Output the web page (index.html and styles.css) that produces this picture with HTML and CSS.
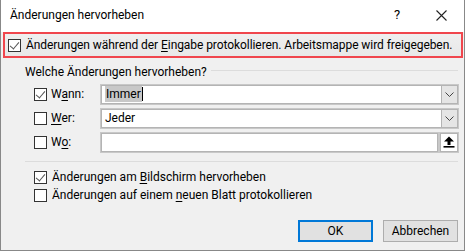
FILE: index.html
```html
<!DOCTYPE html>
<html lang="de">

<head>
	<meta charset="UTF-8">
	<meta name="viewport"
				content="width=device-width, initial-scale=1.0">
	<title>Änderungen hervorheben</title>
	<link rel="stylesheet" href="styles.css">
</head>

<body>
	<div class="dialog">
		<div class="titlebar">
			<span class="title">Änderungen hervorheben</span>
			<span class="help">?</span>
			<span class="close">
				<svg width="11" height="11" viewBox="0 0 11 11">
					<path d="M0.5 0.5 L10.5 10.5 M10.5 0.5 L0.5 10.5" stroke="#222" stroke-width="1.1" fill="none" />
				</svg>
			</span>
		</div>

		<div class="track-row">
			<span class="check checked"></span>
			<span class="label">Änderungen während der <u>E</u>ingabe protokollieren. Arbeitsmappe wird freigegeben.</span>
		</div>

		<div class="group">
			<div class="group-title">
				<span>Welche Änderungen hervorheben?</span>
				<span class="rule"></span>
			</div>

			<div class="field-row">
				<span class="check checked"></span>
				<span class="field-label">W<u>a</u>nn:</span>
				<div class="combo">
					<span class="combo-text"><span class="selected">Immer</span><span class="caret"></span></span>
					<span class="drop"><svg width="9" height="5" viewBox="0 0 9 5"><path d="M0.5 0.5 L4.5 4.5 L8.5 0.5" stroke="#444" fill="none" /></svg></span>
				</div>
			</div>

			<div class="field-row">
				<span class="check"></span>
				<span class="field-label"><u>W</u>er:</span>
				<div class="combo">
					<span class="combo-text">Jeder</span>
					<span class="drop"><svg width="9" height="5" viewBox="0 0 9 5"><path d="M0.5 0.5 L4.5 4.5 L8.5 0.5" stroke="#444" fill="none" /></svg></span>
				</div>
			</div>

			<div class="field-row">
				<span class="check"></span>
				<span class="field-label">W<u>o</u>:</span>
				<div class="ref-box">
					<span class="ref-input"></span>
					<span class="ref-btn">
						<svg width="12" height="12" viewBox="0 0 12 12">
							<path d="M6 0.5 L11 5.5 L7.5 5.5 L7.5 9 L4.5 9 L4.5 5.5 L1 5.5 Z" fill="#000" />
							<rect x="0.5" y="10" width="11" height="1.6" fill="#000" />
						</svg>
					</span>
				</div>
			</div>

			<div class="separator"></div>

			<div class="option-row">
				<span class="check checked"></span>
				<span class="label">Änderungen am <u>B</u>ildschirm hervorheben</span>
			</div>
			<div class="option-row">
				<span class="check"></span>
				<span class="label">Änderungen auf einem <u>n</u>euen Blatt protokollieren</span>
			</div>
		</div>

		<div class="buttons">
			<button class="btn default">OK</button>
			<button class="btn">Abbrechen</button>
		</div>
	</div>
</body>

</html>
```

FILE: styles.css
```css
* {
	box-sizing: border-box;
}

body {
	margin: 0;
	background-color: #f0f0f0;
	font-family: Roboto, "Liberation Sans", sans-serif;
	font-size: 12px;
	line-height: 16px;
	color: #000;
}

u {
	text-decoration-thickness: 1px;
	text-underline-offset: 2px;
}

.dialog {
	width: 465px;
	height: 251px;
	background-color: #f0f0f0;
	border: 1px solid #888;
	border-top: none;
	overflow: hidden;
}

.titlebar {
	height: 32px;
	background-color: #fff;
	display: flex;
	align-items: center;
	padding-left: 9px;
}

.title {
	flex: 1;
	font-size: 12px;
	margin-top: -2px;
}

.help {
	width: 12px;
	font-size: 13px;
	margin-top: -2px;
	margin-right: 30px;
}

.close {
	display: flex;
	margin-top: -2px;
	margin-right: 17px;
}

.label {
	white-space: nowrap;
}

.track-row {
	height: 26px;
	margin: 0 1px 0 2px;
	border: 2px solid #f0464d;
	background: linear-gradient(#efefef, #e8e8e8);
	display: flex;
	align-items: center;
	padding-left: 3px;
	gap: 5px;
	letter-spacing: -0.07px;
}

.check {
	width: 13px;
	height: 13px;
	border: 1px solid #333;
	background-color: #fff;
	flex: none;
	position: relative;
}

.check.checked::after {
	content: "";
	position: absolute;
	left: 3px;
	top: 0px;
	width: 4px;
	height: 8px;
	border-right: 1px solid #555;
	border-bottom: 1px solid #555;
	transform: rotate(40deg);
}

.group {
	padding: 0 6px 0 24px;
}

.group-title {
	display: flex;
	align-items: center;
	height: 24px;
	padding-top: 4px;
}

.rule {
	flex: 1;
	height: 1px;
	background-color: #dcdcdc;
	margin-left: 4px;
	margin-top: -3px;
}

.field-row {
	display: flex;
	align-items: center;
	height: 24px;
	padding-left: 9px;
}

.field-label {
	width: 54px;
	padding-left: 4px;
}

.combo {
	flex: 1;
	height: 19px;
	border: 1px solid #b4b4b4;
	outline: 1px solid #c8c8c8;
	background-color: #fff;
	display: flex;
	align-items: center;
}

.combo-text {
	flex: 1;
	padding-left: 3px;
	display: flex;
	align-items: center;
}

.selected {
	background-color: #c8c8c8;
	padding: 0 1px;
}

.caret {
	width: 1px;
	height: 14px;
	background-color: #000;
}

.drop {
	width: 16px;
	height: 17px;
	background-color: #e5e5e5;
	border-left: 1px solid #b4b4b4;
	display: flex;
	align-items: center;
	justify-content: center;
}

.ref-box {
	flex: 1;
	height: 19px;
	display: flex;
	gap: 2px;
}

.ref-input {
	flex: 1;
	border: 1px solid #b4b4b4;
	outline: 1px solid #c8c8c8;
	background-color: #fff;
}

.ref-btn {
	width: 18px;
	border: 1px solid #b4b4b4;
	outline: 1px solid #c8c8c8;
	background-color: #fff;
	display: flex;
	align-items: center;
	justify-content: center;
}

.separator {
	height: 1px;
	background-color: #dcdcdc;
	margin: 7px 0 6px 0;
}

.option-row {
	display: flex;
	align-items: center;
	gap: 5px;
	height: 18px;
	padding-left: 9px;
}

.buttons {
	display: flex;
	justify-content: flex-end;
	gap: 10px;
	padding: 16px 6px 0 0;
}

.btn {
	width: 75px;
	height: 22px;
	font-family: inherit;
	font-size: 12px;
	color: #000;
	background-color: #e1e1e1;
	border: 1px solid #adadad;
	padding: 0;
}

.btn.default {
	border: 2px solid #0078d7;
}
```
